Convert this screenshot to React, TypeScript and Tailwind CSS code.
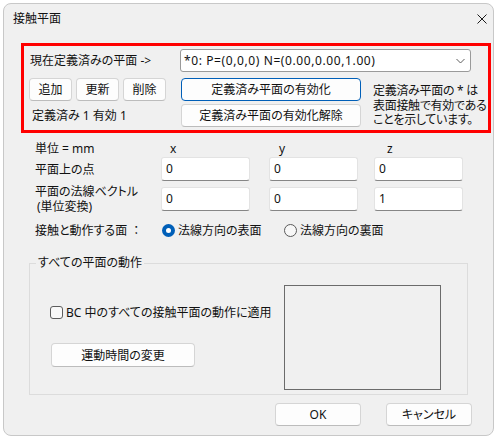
import React from 'react';

function Btn({ children, className = '', focused = false }: { children: React.ReactNode; className?: string; focused?: boolean }) {
  return (
    <button
      className={`flex items-center justify-center rounded-[4px] border bg-[#fdfdfd] text-[12px] leading-[15px] text-[#111111] ${
        focused ? 'border-[#005fb8]' : 'border-[#d5d5d5] border-b-[#bcbcbc]'
      } ${className}`}
    >
      {children}
    </button>
  );
}

function Field({ value, className = '' }: { value: string; className?: string }) {
  return (
    <div className={`flex h-[24px] w-[89px] items-center rounded-[3px] border border-[#e3e3e3] border-b-[#868686] bg-white pb-[2px] pl-[4px] ${className}`}>
      {value}
    </div>
  );
}

export default function App() {
  return (
    <div className="h-[438px] w-[499px] bg-white pl-[3px] pt-[3px] font-['Noto_Sans','Noto_Sans_CJK_JP',sans-serif] text-[12px] leading-[15px] text-[#111111] [font-feature-settings:'palt']">
      <div className="flex h-[433px] w-[491px] flex-col rounded-[8px] border border-[#c8c8c8] bg-[#f0f0f0]">
        <div className="flex h-[29px] items-center justify-between pl-[9px] pr-[6px]">
          <span>接触平面</span>
          <svg width="10" height="10" viewBox="0 0 10 10">
            <path d="M0.5 0.5L9.5 9.5M9.5 0.5L0.5 9.5" stroke="#1b1b1b" strokeWidth="1" />
          </svg>
        </div>

        <div className="ml-[17px] mt-[10px] h-[90px] w-[470px] border-[3px] border-[#ff0000]">
          <div className="mt-[3px] flex h-[23px] items-center">
            <div className="w-[156px] pl-[6px]">現在定義済みの平面 -&gt;</div>
            <div className="flex h-[23px] w-[291px] items-center justify-between rounded-[3px] border border-[#9a9a9a] bg-white pl-[3px] pr-[5px]">
              <span className="tracking-[0.6px]">*0: P=(0,0,0) N=(0.00,0.00,1.00)</span>
              <svg width="9" height="6" viewBox="0 0 9 6">
                <path d="M0.5 1L4.5 5L8.5 1" fill="none" stroke="#5f5f5f" strokeWidth="1" />
              </svg>
            </div>
          </div>

          <div className="mt-[6px] flex">
            <div className="w-[156px]">
              <div className="flex gap-[4px] pl-[5px]">
                <Btn className="h-[23px] w-[43px]">追加</Btn>
                <Btn className="h-[23px] w-[43px]">更新</Btn>
                <Btn className="h-[23px] w-[43px]">削除</Btn>
              </div>
              <div className="mt-[7px] pl-[8px]">定義済み 1 有効 1</div>
            </div>
            <div className="ml-[1px] flex flex-col gap-[3px]">
              <Btn focused className="h-[23px] w-[180px]">定義済み平面の有効化</Btn>
              <Btn className="h-[23px] w-[180px]">定義済み平面の有効化解除</Btn>
            </div>
            <div className="ml-[12px] mt-[6px] whitespace-nowrap leading-[14.5px] tracking-[-0.3px]">
              定義済み平面の * は<br />
              表面接触で有効である<br />
              ことを示しています。
            </div>
          </div>
        </div>

        <div className="pl-[31px]">
          <div className="mt-[7px] flex h-[17px] items-center">
            <span className="w-[126px]">単位 = mm</span>
            <span className="w-[108px] pl-[9px]">x</span>
            <span className="w-[105px] pl-[10px]">y</span>
            <span className="pl-[13px]">z</span>
          </div>
          <div className="flex h-[24px] items-center">
            <span className="w-[126px]">平面上の点</span>
            <Field value="0" />
            <Field value="0" className="ml-[19px]" />
            <Field value="0" className="ml-[16px]" />
          </div>
          <div className="mt-[6px] flex h-[24px] items-center">
            <div className="flex w-[126px] flex-col leading-[15px]">
              <span>平面の法線ベクトル</span>
              <span className="pl-[2px]">(単位変換)</span>
            </div>
            <Field value="0" />
            <Field value="0" className="ml-[19px]" />
            <Field value="1" className="ml-[16px]" />
          </div>
          <div className="mt-[9px] flex h-[20px] items-center">
            <span className="w-[127px]">
              接触と動作する面<span className="[font-feature-settings:normal]"> ：</span>
            </span>
            <div className="flex w-[122px] items-center">
              <span className="flex h-[13px] w-[13px] items-center justify-center rounded-full bg-[#005fb8]">
                <span className="h-[5px] w-[5px] rounded-full bg-white" />
              </span>
              <span className="ml-[3px]">法線方向の表面</span>
            </div>
            <div className="flex items-center">
              <span className="h-[13px] w-[13px] rounded-full border border-[#5a5a5a] bg-[#f7f7f7]" />
              <span className="ml-[3px]">法線方向の裏面</span>
            </div>
          </div>
        </div>

        <fieldset className="ml-[25px] mt-[15px] h-[140px] w-[439px] border border-[#dcdcdc]">
          <legend className="ml-[6px] px-[2px] leading-[16px]">すべての平面の動作</legend>
          <div className="flex">
            <div className="w-[254px] pl-[20px]">
              <div className="mt-[33px] flex h-[16px] items-center">
                <span className="h-[13px] w-[13px] rounded-[3px] border border-[#5d5d5d] bg-[#f9f9f9]" />
                <span className="ml-[3px]">BC 中のすべての接触平面の動作に適用</span>
              </div>
              <Btn className="ml-[1px] mt-[23px] h-[24px] w-[144px]">運動時間の変更</Btn>
            </div>
            <div className="mt-[14px] h-[105px] w-[157px] border border-[#6b6b6b]" />
          </div>
        </fieldset>

        <div className="mt-[8px] flex justify-end gap-[25px] pr-[21px]">
          <Btn className="h-[23px] w-[86px]">OK</Btn>
          <Btn className="h-[23px] w-[86px]">キャンセル</Btn>
        </div>
      </div>
    </div>
  );
}
